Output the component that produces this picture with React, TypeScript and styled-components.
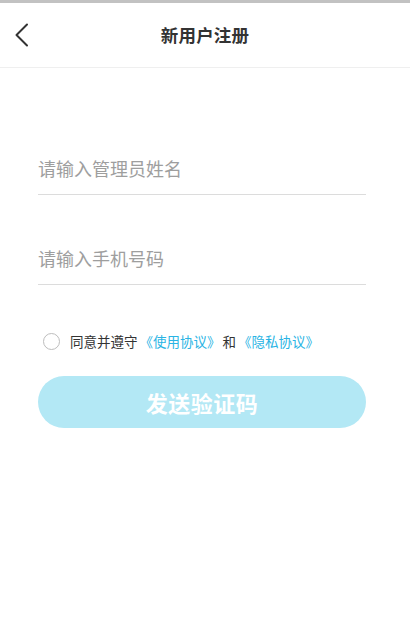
import React from "react";
import styled, { createGlobalStyle } from "styled-components";

const GlobalStyle = createGlobalStyle`
  * {
    box-sizing: border-box;
  }
  body {
    margin: 0;
    background: #fff;
    font-family: "Noto Sans CJK SC", "Noto Sans", sans-serif;
  }
`;

const App = () => {
  return (
    <Page>
      <GlobalStyle />
      <StatusStrip />
      <Header>
        <BackButton aria-label="back">
          <svg width="16" height="24" viewBox="0 0 16 24">
            <polyline
              points="13,1.5 2.5,12 13,22.5"
              fill="none"
              stroke="#333"
              strokeWidth="2"
              strokeLinecap="round"
              strokeLinejoin="round"
            />
          </svg>
        </BackButton>
        <Title>新用户注册</Title>
      </Header>
      <Form>
        <Field>
          <Input placeholder="请输入管理员姓名" />
        </Field>
        <Field>
          <Input placeholder="请输入手机号码" />
        </Field>
        <AgreeRow>
          <Radio />
          <AgreeText>
            同意并遵守<Link>《使用协议》</Link>和<Link>《隐私协议》</Link>
          </AgreeText>
        </AgreeRow>
        <SubmitButton disabled>发送验证码</SubmitButton>
      </Form>
    </Page>
  );
};

export default App;

const Page = styled.div`
  display: flex;
  flex-direction: column;
  width: 100%;
  min-height: 622px;
  background: #fff;
`;

const StatusStrip = styled.div`
  height: 3px;
  background: #c2c2c2;
`;

const Header = styled.div`
  position: relative;
  display: flex;
  align-items: center;
  justify-content: center;
  height: 65px;
  border-bottom: 1px solid #efefef;
`;

const BackButton = styled.button`
  position: absolute;
  left: 14px;
  top: 20px;
  display: flex;
  padding: 0;
  border: none;
  background: none;
`;

const Title = styled.h1`
  margin: 0 0 2px;
  font-size: 17.5px;
  font-weight: 700;
  color: #333;
  letter-spacing: 0.2px;
`;

const Form = styled.div`
  display: flex;
  flex-direction: column;
  padding: 76px 44px 0 38px;
`;

const Field = styled.div`
  display: flex;
  height: 51px;
  border-bottom: 1px solid #dcdcdc;
  & + & {
    margin-top: 39px;
  }
`;

const Input = styled.input`
  flex: 1;
  border: none;
  outline: none;
  padding: 0 0 2px;
  background: transparent;
  font-family: inherit;
  font-size: 18px;
  color: #333;
  &::placeholder {
    color: #9e9e9e;
  }
`;

const AgreeRow = styled.div`
  display: flex;
  align-items: center;
  height: 20px;
  margin-top: 46px;
  padding-left: 5px;
`;

const Radio = styled.span`
  flex-shrink: 0;
  width: 17px;
  height: 17px;
  border: 1px solid #bdbdbd;
  border-radius: 50%;
`;

const AgreeText = styled.span`
  margin-left: 10px;
  font-size: 13.5px;
  color: #333;
  white-space: nowrap;
`;

const Link = styled.span`
  margin: 0 2px;
  color: #2ab4e4;
`;

const SubmitButton = styled.button`
  height: 52px;
  margin-top: 25px;
  border: none;
  border-radius: 26px;
  background: #b3e8f5;
  color: #fff;
  font-family: inherit;
  font-size: 22px;
  font-weight: 700;
  letter-spacing: 0.5px;
`;
